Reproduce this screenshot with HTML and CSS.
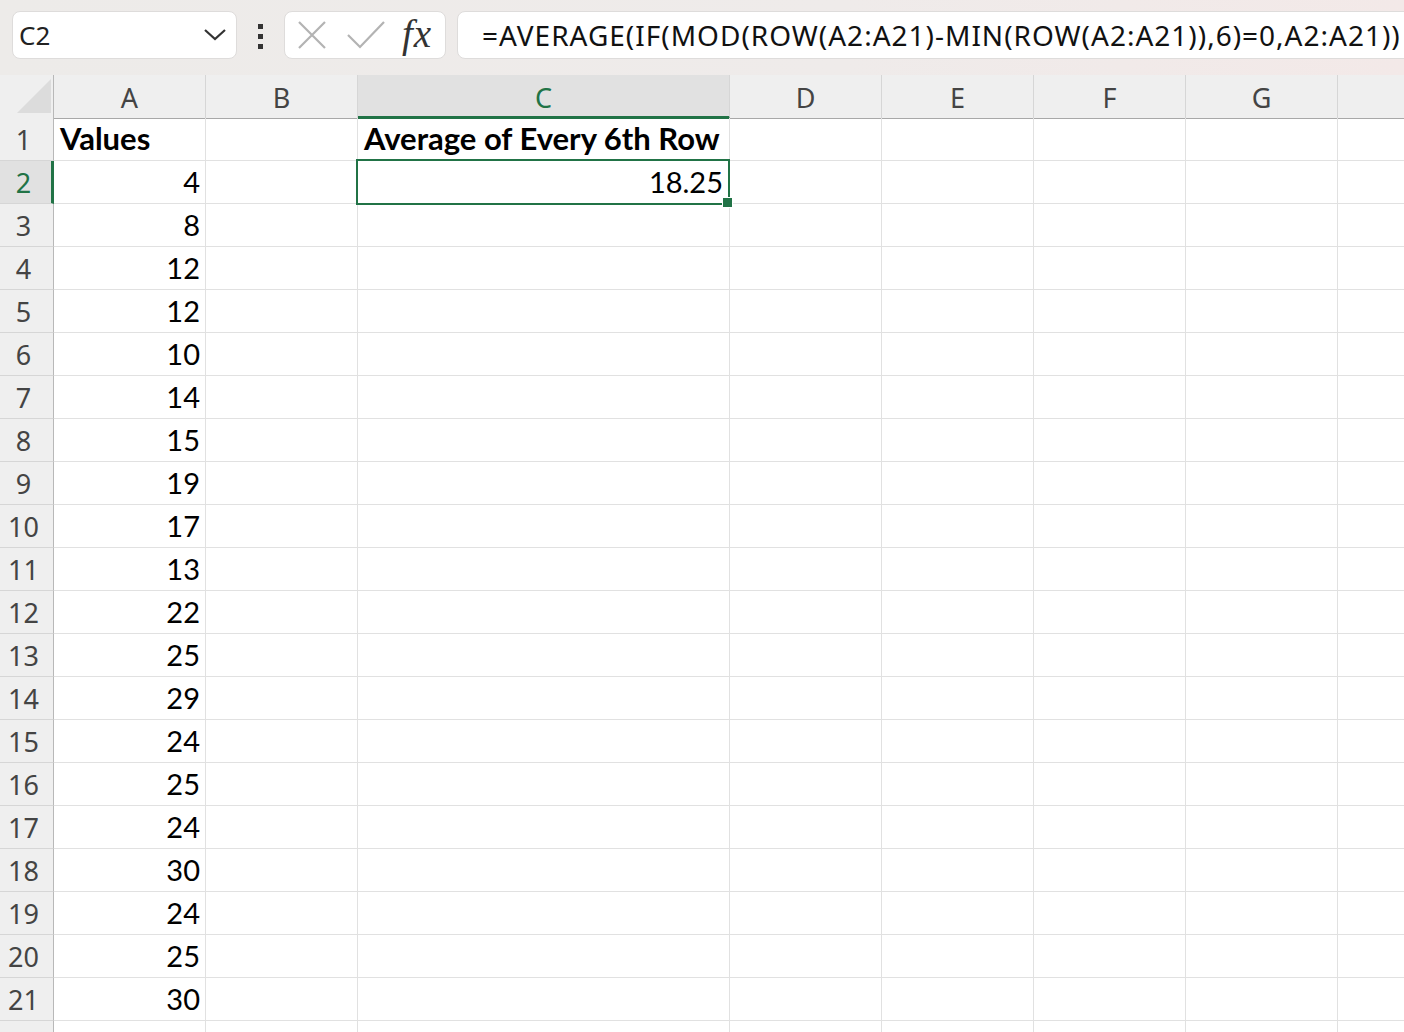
FILE: index.html
```html
<!DOCTYPE html>
<html lang="en">
<head>
    <meta charset="UTF-8">
    <title>Average of Every 6th Row</title>
    <link rel="stylesheet" href="styles.css">
</head>
<body>
    <!-- formula bar -->
    <div class="topbar">
        <div class="namebox">
            <span>C2</span>
            <svg class="chev" width="24" height="14" viewBox="0 0 24 14"><path d="M2 2 L12 11 L22 2" fill="none" stroke="#333" stroke-width="2.2"/></svg>
        </div>
        <div class="more"><i></i><i></i><i></i></div>
        <div class="fxbox">
            <svg width="30" height="28" viewBox="0 0 30 28"><path d="M2 1 L28 27 M28 1 L2 27" stroke="#b3b3b3" stroke-width="2.2" fill="none"/></svg>
            <svg width="38" height="28" viewBox="0 0 38 28"><path d="M1 14 L13 26 L37 1" stroke="#b3b3b3" stroke-width="2.2" fill="none"/></svg>
            <span class="fx">fx</span>
        </div>
        <div class="formula"><span>=AVERAGE(IF(MOD(ROW(A2:A21)-MIN(ROW(A2:A21)),6)=0,A2:A21))</span></div>
    </div>

    <!-- sheet -->
    <div class="sheet">
        <div class="row head">
            <div class="rh corner"><svg width="54" height="43" viewBox="0 0 54 43"><polygon points="51,4 51,38 17,38" fill="#dcdcdc"/></svg></div>
            <div class="ch">A</div><div class="ch">B</div><div class="ch sel">C</div><div class="ch">D</div><div class="ch">E</div><div class="ch">F</div><div class="ch">G</div><div class="ch"></div>
        </div>
        <div class="row">
            <div class="rh">1</div><div class="c b">Values</div><div class="c"></div><div class="c b">Average of Every 6th Row</div><div class="c"></div><div class="c"></div><div class="c"></div><div class="c"></div><div class="c"></div>
        </div>
        <div class="row">
            <div class="rh on">2</div><div class="c n">4</div><div class="c"></div><div class="c n active">18.25</div><div class="c"></div><div class="c"></div><div class="c"></div><div class="c"></div><div class="c"></div>
        </div>
        <div class="row"><div class="rh">3</div><div class="c n">8</div><div class="c"></div><div class="c"></div><div class="c"></div><div class="c"></div><div class="c"></div><div class="c"></div><div class="c"></div></div>
        <div class="row"><div class="rh">4</div><div class="c n">12</div><div class="c"></div><div class="c"></div><div class="c"></div><div class="c"></div><div class="c"></div><div class="c"></div><div class="c"></div></div>
        <div class="row"><div class="rh">5</div><div class="c n">12</div><div class="c"></div><div class="c"></div><div class="c"></div><div class="c"></div><div class="c"></div><div class="c"></div><div class="c"></div></div>
        <div class="row"><div class="rh">6</div><div class="c n">10</div><div class="c"></div><div class="c"></div><div class="c"></div><div class="c"></div><div class="c"></div><div class="c"></div><div class="c"></div></div>
        <div class="row"><div class="rh">7</div><div class="c n">14</div><div class="c"></div><div class="c"></div><div class="c"></div><div class="c"></div><div class="c"></div><div class="c"></div><div class="c"></div></div>
        <div class="row"><div class="rh">8</div><div class="c n">15</div><div class="c"></div><div class="c"></div><div class="c"></div><div class="c"></div><div class="c"></div><div class="c"></div><div class="c"></div></div>
        <div class="row"><div class="rh">9</div><div class="c n">19</div><div class="c"></div><div class="c"></div><div class="c"></div><div class="c"></div><div class="c"></div><div class="c"></div><div class="c"></div></div>
        <div class="row"><div class="rh">10</div><div class="c n">17</div><div class="c"></div><div class="c"></div><div class="c"></div><div class="c"></div><div class="c"></div><div class="c"></div><div class="c"></div></div>
        <div class="row"><div class="rh">11</div><div class="c n">13</div><div class="c"></div><div class="c"></div><div class="c"></div><div class="c"></div><div class="c"></div><div class="c"></div><div class="c"></div></div>
        <div class="row"><div class="rh">12</div><div class="c n">22</div><div class="c"></div><div class="c"></div><div class="c"></div><div class="c"></div><div class="c"></div><div class="c"></div><div class="c"></div></div>
        <div class="row"><div class="rh">13</div><div class="c n">25</div><div class="c"></div><div class="c"></div><div class="c"></div><div class="c"></div><div class="c"></div><div class="c"></div><div class="c"></div></div>
        <div class="row"><div class="rh">14</div><div class="c n">29</div><div class="c"></div><div class="c"></div><div class="c"></div><div class="c"></div><div class="c"></div><div class="c"></div><div class="c"></div></div>
        <div class="row"><div class="rh">15</div><div class="c n">24</div><div class="c"></div><div class="c"></div><div class="c"></div><div class="c"></div><div class="c"></div><div class="c"></div><div class="c"></div></div>
        <div class="row"><div class="rh">16</div><div class="c n">25</div><div class="c"></div><div class="c"></div><div class="c"></div><div class="c"></div><div class="c"></div><div class="c"></div><div class="c"></div></div>
        <div class="row"><div class="rh">17</div><div class="c n">24</div><div class="c"></div><div class="c"></div><div class="c"></div><div class="c"></div><div class="c"></div><div class="c"></div><div class="c"></div></div>
        <div class="row"><div class="rh">18</div><div class="c n">30</div><div class="c"></div><div class="c"></div><div class="c"></div><div class="c"></div><div class="c"></div><div class="c"></div><div class="c"></div></div>
        <div class="row"><div class="rh">19</div><div class="c n">24</div><div class="c"></div><div class="c"></div><div class="c"></div><div class="c"></div><div class="c"></div><div class="c"></div><div class="c"></div></div>
        <div class="row"><div class="rh">20</div><div class="c n">25</div><div class="c"></div><div class="c"></div><div class="c"></div><div class="c"></div><div class="c"></div><div class="c"></div><div class="c"></div></div>
        <div class="row"><div class="rh">21</div><div class="c n">30</div><div class="c"></div><div class="c"></div><div class="c"></div><div class="c"></div><div class="c"></div><div class="c"></div><div class="c"></div></div>
        <div class="row last"><div class="rh"></div><div class="c"></div><div class="c"></div><div class="c"></div><div class="c"></div><div class="c"></div><div class="c"></div><div class="c"></div><div class="c"></div></div>
    </div>
</body>
</html>
```

FILE: styles.css
```css
* { box-sizing: border-box; }
html, body {
    margin: 0;
    width: 1404px;
    height: 1032px;
    overflow: hidden;
    background: #fff;
}

/* formula bar */
.topbar {
    height: 75px;
    display: flex;
    align-items: flex-start;
    padding: 11px 0 0 12px;
    background: linear-gradient(to right, #edebe9, #efebea 60%, #f3e9e8);
    font-family: "Noto Sans", sans-serif;
    overflow: hidden;
}
.topbar > div { flex-shrink: 0; }
.namebox, .fxbox, .formula {
    height: 48px;
    background: #fff;
    border: 1px solid #dedcdb;
    border-radius: 8px;
    display: flex;
    align-items: center;
}
.namebox {
    width: 225px;
    justify-content: space-between;
    padding: 0 9px 0 6px;
    font-size: 26px;
    color: #222;
}
.namebox span { line-height: 1; }
.more {
    width: 47px;
    display: flex;
    flex-direction: column;
    align-items: center;
    gap: 5px;
    padding-top: 13px;
}
.more i {
    display: block;
    width: 5px;
    height: 5px;
    background: #333;
}
.fxbox {
    width: 162px;
    padding: 0 0 0 12px;
    gap: 20px;
}
.fxbox .fx {
    font-family: "Liberation Serif", serif;
    font-style: italic;
    font-size: 39px;
    color: #333;
    margin-left: -3px;
    letter-spacing: 1px;
    line-height: 1;
    padding-bottom: 4px;
}
.formula {
    margin-left: 11px;
    width: 1000px;
    border-radius: 8px 0 0 8px;
    padding-left: 24px;
    white-space: nowrap;
    overflow: hidden;
}
.formula span {
    font-size: 28px;
    letter-spacing: 1px;
    color: #111;
    line-height: 1;
}

/* grid */
.row {
    display: grid;
    grid-template-columns: 54px 152px 152px 372px 152px 152px 152px 152px 152px;
    height: 43px;
}

.rh {
    background: #efefef;
    border-right: 1px solid #b8b8b8;
    border-bottom: 1px solid #d6d6d6;
    font-family: "Noto Sans", sans-serif;
    font-size: 27px;
    color: #444;
    display: flex;
    align-items: center;
    justify-content: center;
    padding-right: 6px;
}
.rh.on {
    background: #e1e1e1;
    color: #217346;
    border-right: 3px solid #217346;
    padding-right: 4px;
}
.rh.corner {
    padding: 0;
    border-bottom: 1px solid #a8a8a8;
    display: block;
}
.rh.corner svg { display: block; }

.ch {
    background: #efefef;
    border-right: 1px solid #d6d6d6;
    border-bottom: 1px solid #a8a8a8;
    font-family: "Noto Sans", sans-serif;
    font-size: 27px;
    color: #444;
    display: flex;
    align-items: center;
    justify-content: center;
    padding-top: 2px;
}
.ch.sel {
    background: #e1e1e1;
    color: #217346;
    border-bottom: 3px solid #217346;
    padding-top: 4px;
}

.c {
    border-right: 1px solid #e1e1e1;
    border-bottom: 1px solid #e1e1e1;
    font-family: Lato, "Liberation Sans", sans-serif;
    font-size: 29px;
    color: #000;
    display: flex;
    align-items: flex-end;
    padding: 0 5px 4px 6px;
    white-space: nowrap;
}
.c.b { font-weight: bold; font-size: 31px; padding-bottom: 3px; }
.c.n { justify-content: flex-end; }

.c.active { position: relative; padding-right: 6px; }
.c.active::after {
    content: "";
    position: absolute;
    top: -2px;
    left: -2px;
    right: -1px;
    bottom: -2px;
    border: 2px solid #217346;
}
.c.active::before {
    content: "";
    position: absolute;
    right: -4px;
    bottom: -5px;
    width: 9px;
    height: 9px;
    background: #217346;
    border: 1px solid #fff;
    z-index: 1;
}
```
